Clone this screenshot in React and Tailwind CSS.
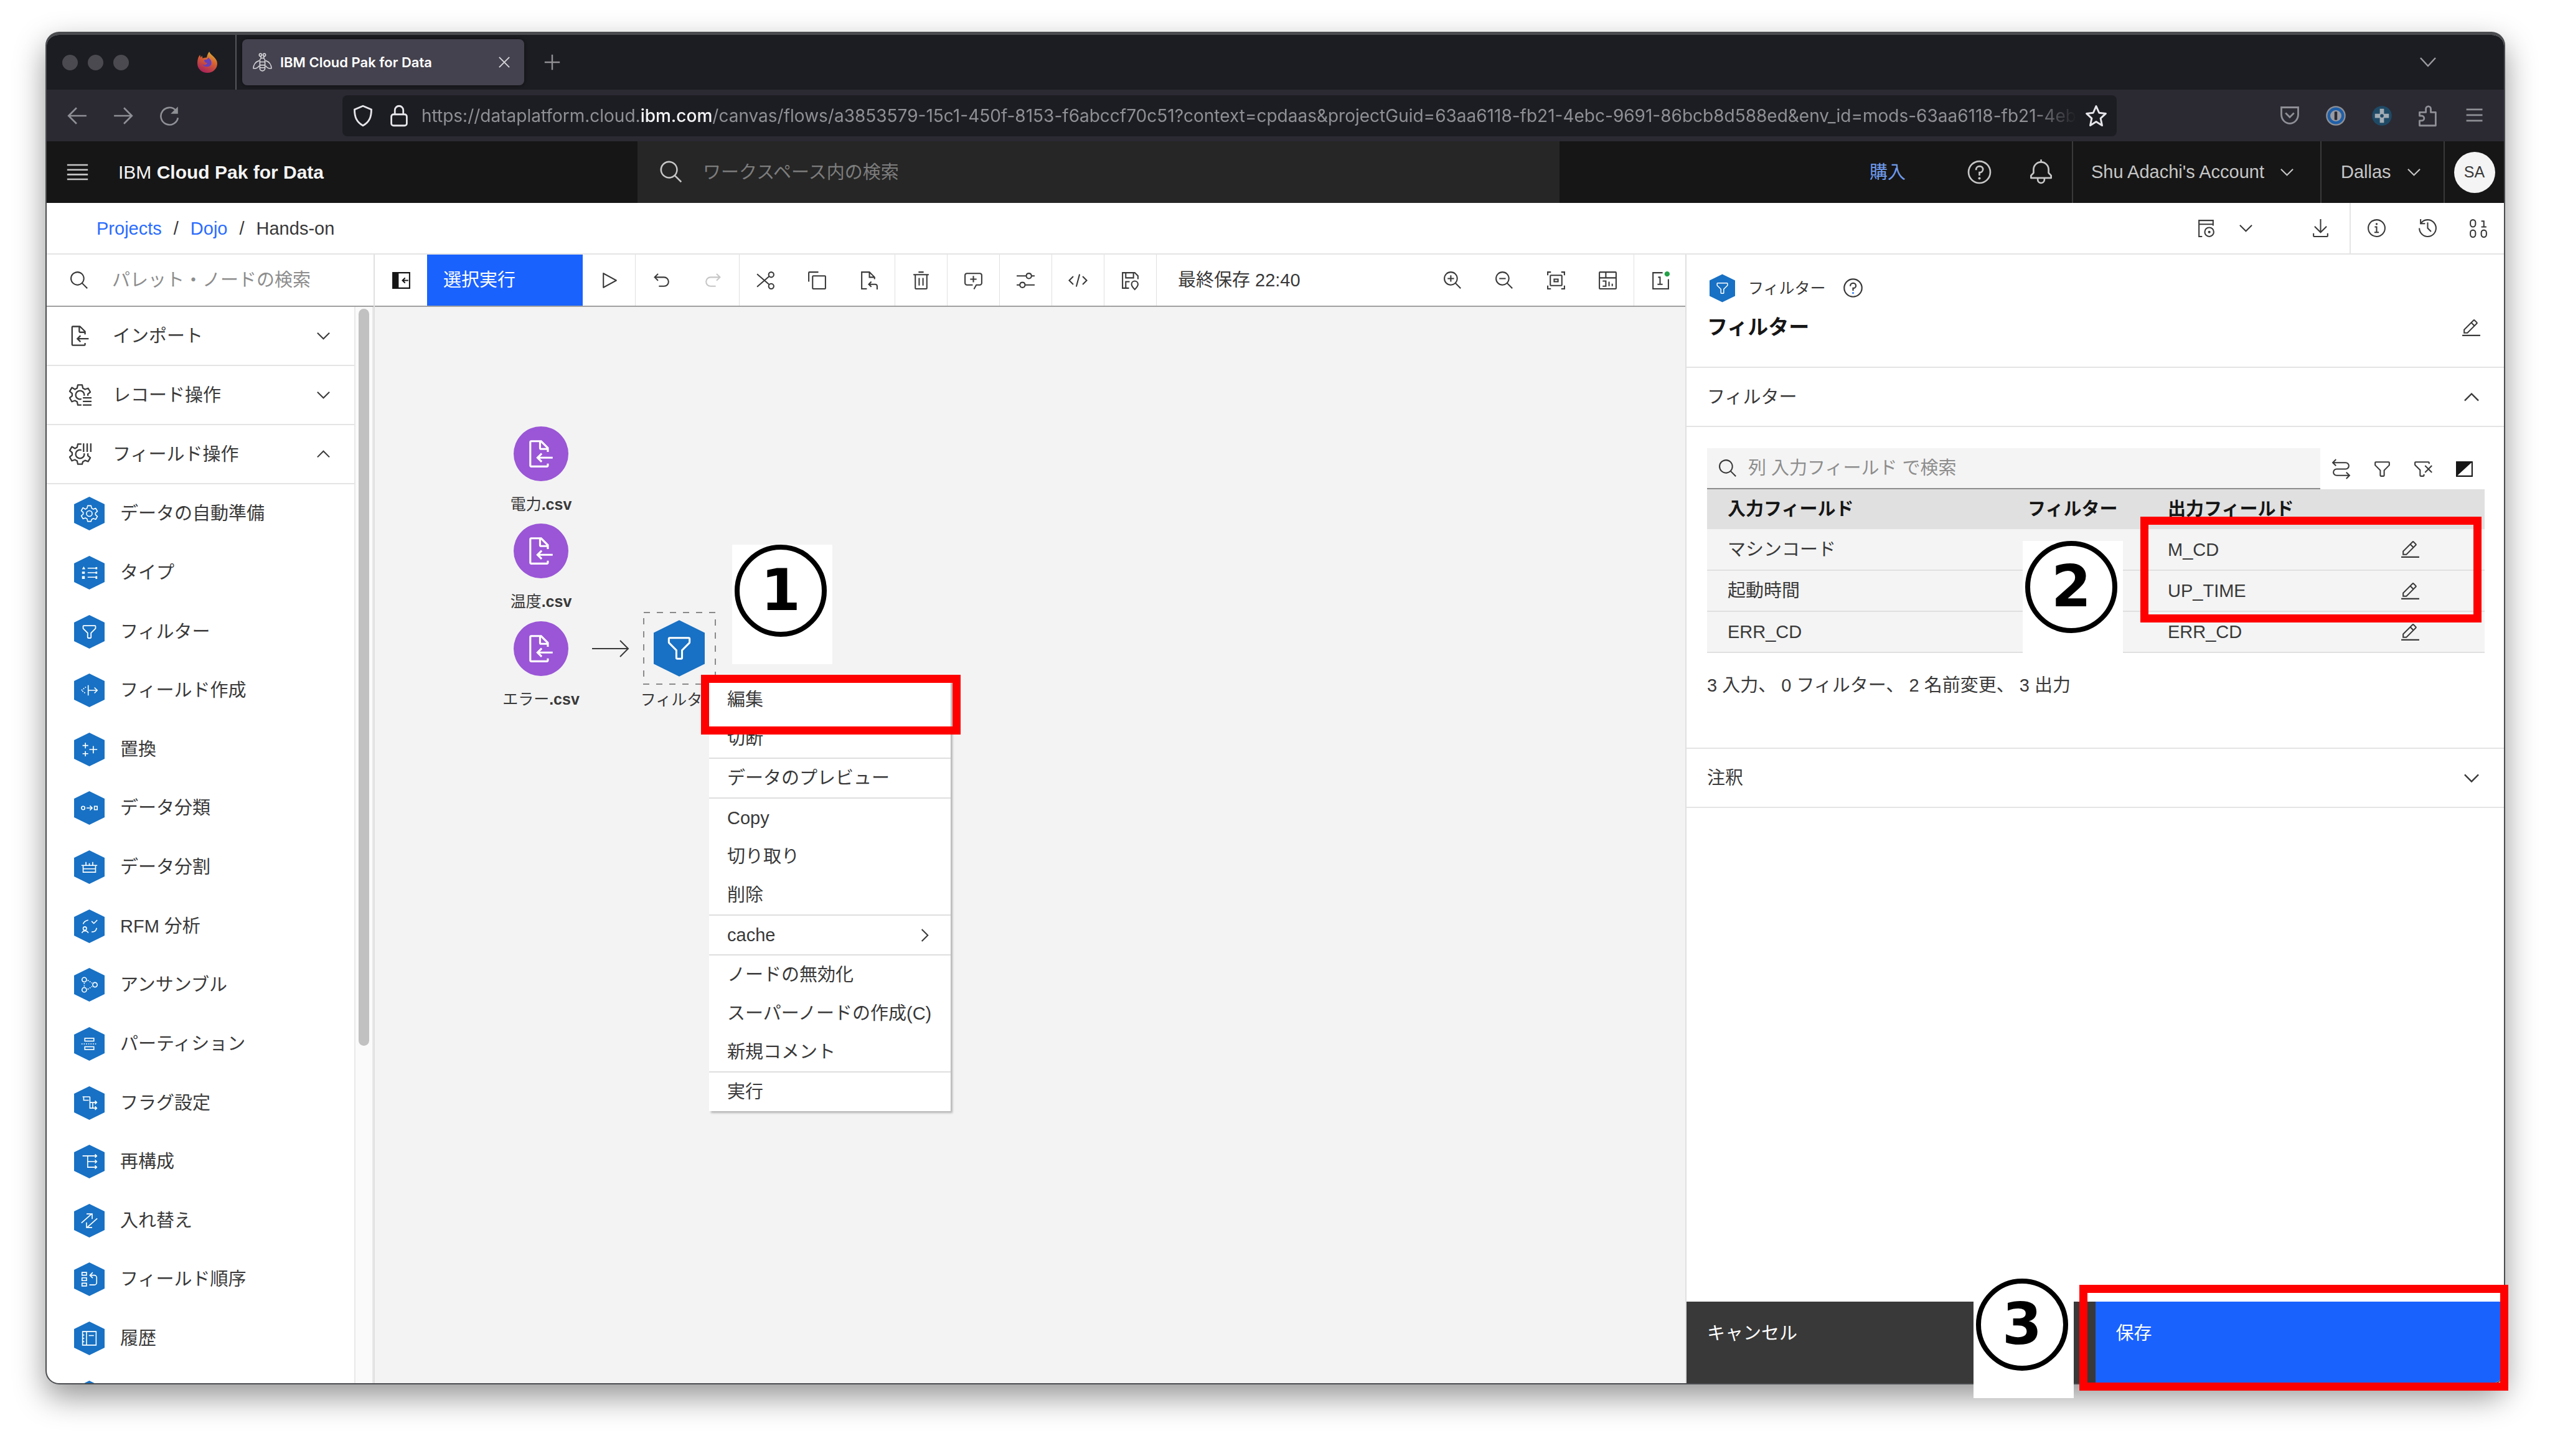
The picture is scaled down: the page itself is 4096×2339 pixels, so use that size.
import React from "react";

const FONT = "font-['Liberation_Sans','Noto_Sans_CJK_JP',sans-serif]";
const UI_FONT = "font-['Inter','Noto_Sans_CJK_JP',sans-serif]";

function Svg({ className = "size-[33px]", children, ...rest }) {
  return (
    <svg viewBox="0 0 32 32" className={"shrink-0 " + className} fill="currentColor" aria-hidden="true" {...rest}>
      {children}
    </svg>
  );
}

const line = { fill: "none", stroke: "currentColor", strokeWidth: 2 };

const GEAR =
  "M13 2h6l1 4.500 3 1.700 4.300-1.500 3 5.200-3.400 3v3.200l3.400 3-3 5.200-4.300-1.500-3 1.700L19 30h-6l-1-4.500-3-1.700-4.300 1.500-3-5.200 3.400-3v-3.200l-3.400-3 3-5.200L9 8.200l3-1.700Z";

function GearPath({ clip, id }) {
  return (
    <>
      <clipPath id={"gear-" + id}>
        <path d={clip} />
      </clipPath>
      <g clipPath={"url(#gear-" + id + ")"} {...line}>
        <path d={GEAR} strokeLinejoin="round" />
        <circle cx="16" cy="16" r="6" />
      </g>
    </>
  );
}

const ICONS = {
  menu: <path {...line} d="M3 7h26M3 13h26M3 19h26M3 25h26" />,
  search: <path d="M29 27.6 21.4 20A11 11 0 1 0 20 21.4L27.6 29ZM4 13a9 9 0 1 1 9 9 9 9 0 0 1-9-9Z" />,
  help: (
    <>
      <circle {...line} cx="16" cy="16" r="13" />
      <path {...line} d="M12 13.5V13a4 4 0 0 1 4-4h.5a3.7 3.7 0 0 1 0 7.4H16V20" />
      <circle cx="16" cy="23.5" r="1.5" />
    </>
  ),
  helpBlue: (
    <>
      <circle {...line} cx="16" cy="16" r="13" />
      <path {...line} d="M12 13.5V13a4 4 0 0 1 4-4h.5a3.7 3.7 0 0 1 0 7.4H16V20" />
      <circle cx="16" cy="23.5" r="1.5" fill="#4589ff" />
    </>
  ),
  bell: (
    <path d="M28.7 19.3 26 16.6V13a10 10 0 0 0-9-9.95V1h-2v2.05A10 10 0 0 0 6 13v3.6l-2.7 2.7a1 1 0 0 0-.3.7v3a1 1 0 0 0 1 1h7v.8a5.2 5.2 0 0 0 4.5 5.2A5 5 0 0 0 21 25v-1h7a1 1 0 0 0 1-1v-3a1 1 0 0 0-.3-.7ZM19 25a3 3 0 0 1-6 0v-1h6Zm8-3H5v-1.6l2.7-2.7a1 1 0 0 0 .3-.7v-4a8 8 0 0 1 16 0v4a1 1 0 0 0 .3.7l2.7 2.7Z" />
  ),
  chevronDown: <path d="M16 22 6 12l1.4-1.4 8.6 8.6 8.6-8.6L26 12z" />,
  chevronUp: <path d="m16 10 10 10-1.4 1.4-8.6-8.6-8.6 8.6L6 20z" />,
  chevronRight: <path d="M22 16 12 26l-1.4-1.4 8.6-8.6-8.6-8.6L12 6z" />,
  schedule: (
    <>
      <path {...line} d="M10 29H5V4h22v8M5 10h22" />
      <circle {...line} cx="21" cy="22" r="7" />
      <circle cx="21" cy="22" r="2" />
    </>
  ),
  download: (
    <path d="M26 24v4H6v-4H4v4a2 2 0 0 0 2 2h20a2 2 0 0 0 2-2v-4ZM26 14l-1.41-1.41L17 20.17V2h-2v18.17l-7.59-7.58L6 14l10 10Z" />
  ),
  info: (
    <>
      <circle {...line} cx="16" cy="16" r="13" />
      <path {...line} d="M13 14h3v8M12.5 22.5h7" />
      <circle cx="16" cy="9.5" r="1.6" />
    </>
  ),
  history: (
    <>
      <path d="M20.59 22 15 16.41V7h2v8.58l5 5.01Z" />
      <path d="M16 2A13.94 13.94 0 0 0 6 6.23V2H4v8h8V8H7.08A12 12 0 1 1 4 16H2A14 14 0 1 0 16 2Z" />
    </>
  ),
  binary: (
    <g {...line}>
      <rect x="3" y="3" width="8" height="11" rx="4" />
      <path d="M20 5h4v9M20 14h8" />
      <rect x="3" y="19" width="8" height="11" rx="4" />
      <rect x="20" y="19" width="8" height="11" rx="4" />
    </g>
  ),
  panelToggle: (
    <>
      <path {...line} d="M3 4h26v24H3z" />
      <path d="M3 4h9v24H3z" />
      <path {...line} d="M27 16h-9M22 12l-4 4 4 4" />
    </>
  ),
  play: (
    <path d="M7 28a1 1 0 0 1-1-1V5a1 1 0 0 1 1.48-.88l20 11a1 1 0 0 1 0 1.76l-20 11A1 1 0 0 1 7 28ZM8 6.69v18.62L24.93 16Z" />
  ),
  undo: (
    <path d="M20 10H7.8l3.6-3.6L10 5l-6 6 6 6 1.4-1.4L7.8 12H20a6 6 0 0 1 0 12h-8v2h8a8 8 0 0 0 0-16Z" />
  ),
  redo: (
    <path d="M12 10h12.2l-3.6-3.6L22 5l6 6-6 6-1.4-1.4 3.6-3.6H12a6 6 0 0 0 0 12h8v2h-8a8 8 0 0 1 0-16Z" />
  ),
  cut: (
    <g {...line}>
      <circle cx="25" cy="7" r="4" />
      <circle cx="25" cy="25" r="4" />
      <path d="M3 6l19 16.5M3 26 22 9.5" />
    </g>
  ),
  copy: (
    <path d="M28 10v18H10V10h18m0-2H10a2 2 0 0 0-2 2v18a2 2 0 0 0 2 2h18a2 2 0 0 0 2-2V10a2 2 0 0 0-2-2ZM4 18H2V4a2 2 0 0 1 2-2h14v2H4Z" />
  ),
  paste: (
    <g {...line}>
      <path d="M13 29H5V3h12l8 8v3M17 3v8h8" />
      <path d="M29 30v-5a3 3 0 0 0-3-3H16M20 18l-4 4 4 4" />
    </g>
  ),
  trash: (
    <path d="M12 12h2v12h-2zM18 12h2v12h-2zM4 6v2h2v20a2 2 0 0 0 2 2h16a2 2 0 0 0 2-2V8h2V6Zm4 22V8h16v20ZM12 2h8v2h-8z" />
  ),
  comment: (
    <>
      <path d="M17.74 30 16 29l4-7h6a2 2 0 0 0 2-2V8a2 2 0 0 0-2-2H6a2 2 0 0 0-2 2v12a2 2 0 0 0 2 2h9v2H6a4 4 0 0 1-4-4V8a4 4 0 0 1 4-4h20a4 4 0 0 1 4 4v12a4 4 0 0 1-4 4h-4.84Z" />
      <path d="M17 9h-2v4h-4v2h4v4h2v-4h4v-2h-4z" />
    </>
  ),
  sliders: (
    <path d="M30 8h-4.1a5 5 0 0 0-9.8 0H2v2h14.1a5 5 0 0 0 9.8 0H30Zm-9 4a3 3 0 1 1 3-3 3 3 0 0 1-3 3ZM2 24h4.1a5 5 0 0 0 9.8 0H30v-2H15.9a5 5 0 0 0-9.8 0H2Zm9-4a3 3 0 1 1-3 3 3 3 0 0 1 3-3Z" />
  ),
  code: (
    <path d="m31 16-7 7-1.41-1.41L28.17 16l-5.58-5.59L24 9ZM1 16l7-7 1.41 1.41L3.83 16l5.58 5.59L8 23ZM12.42 25.484l5.176-19.316 1.932.518-5.176 19.316z" />
  ),
  saveModel: (
    <g {...line}>
      <path d="M14 28H4V4h19l5 5v5M9 4v8h12V4M9 28V18h6" />
      <path d="M23 30c-3-3-5-5-5-8a5 5 0 0 1 10 0c0 3-2 5-5 8Z" />
    </g>
  ),
  zoomIn: (
    <path d="M18 12h-4V8h-2v4H8v2h4v4h2v-4h4zM21.45 20A10.86 10.86 0 0 0 24 13a11 11 0 1 0-11 11 10.86 10.86 0 0 0 7-2.55L27.59 29 29 27.59ZM13 22a9 9 0 1 1 9-9 9 9 0 0 1-9 9Z" />
  ),
  zoomOut: (
    <path d="M18 12H8v2h10zM21.45 20A10.86 10.86 0 0 0 24 13a11 11 0 1 0-11 11 10.86 10.86 0 0 0 7-2.55L27.59 29 29 27.59ZM13 22a9 9 0 1 1 9-9 9 9 0 0 1-9 9Z" />
  ),
  fit: (
    <g {...line}>
      <path d="M3 8V3h5M24 3h5v5M29 24v5h-5M8 29H3v-5" />
      <rect x="7" y="8" width="18" height="16" rx="1" />
      <path d="M13 14h6v4h-6z" />
    </g>
  ),
  minimap: (
    <g {...line}>
      <rect x="3" y="3" width="26" height="26" rx="1" />
      <path d="M3 12h26M13 3v9M8 17h5v8H8M18 25v-7M23 25v-4" />
    </g>
  ),
  messages: (
    <>
      <path {...line} d="M20 4H5v25h24V14M13 11h3v11M12 22h8" />
      <circle cx="27" cy="6" r="4" fill="#24a148" />
    </>
  ),
  importDoc: (
    <path d="M28 19H14.83l2.58-2.59L16 15l-5 5 5 5 1.41-1.41L14.83 21H28ZM24 14v-4a1 1 0 0 0-.29-.71l-7-7A1 1 0 0 0 16 2H6a2 2 0 0 0-2 2v24a2 2 0 0 0 2 2h16a2 2 0 0 0 2-2v-2h-2v2H6V4h8v6a2 2 0 0 0 2 2h6v2Zm-8-4V4.41L21.59 10Z" />
  ),
  edit: (
    <path d="M2 27h28v2H2zM25.4 10c.8-.8.8-2 0-2.8l-3.6-3.6c-.8-.8-2-.8-2.8 0l-15 15V25h6.4l15-15zM20.4 5 24 8.600l-3 3L17.400 8zM6 23v-3.600l10-10 3.600 3.600-10 10z" />
  ),
  filter: (
    <path d="M18 28h-4a2 2 0 0 1-2-2v-7.590L4.590 11A2 2 0 0 1 4 9.590V6a2 2 0 0 1 2-2h20a2 2 0 0 1 2 2v3.590a2 2 0 0 1-.590 1.410L20 18.410V26a2 2 0 0 1-2 2ZM6 6v3.590l8 8V26h4v-8.410l8-8V6Z" />
  ),
  filterRemove: (
    <path d="M30 11.414 28.586 10 24 14.586 19.414 10 18 11.414 22.586 16 18 20.585 19.415 22 24 17.414 28.587 22 30 20.587 25.414 16ZM4 4a2 2 0 0 0-2 2v3.170a2 2 0 0 0 .586 1.415L10 18v8a2 2 0 0 0 2 2h4a2 2 0 0 0 2-2v-2h-2v2h-4v-8.830l-.586-.585L4 9.171V6h20v2h2V6a2 2 0 0 0-2-2Z" />
  ),
  swap: (
    <path {...line} d="M8 1 3 6l5 5M3 6h20a5 5 0 0 1 0 10H9a5 5 0 0 0 0 10h20M24 21l5 5-5 5" />
  ),
  invert: (
    <>
      <path {...line} d="M4 5h24v22H4z" />
      <path d="M3 4h26L3 28z" />
    </>
  ),
  gearRows: (
    <>
      <GearPath clip="M0 0H32V17H18V32H0Z" id="rows" />
      <path {...line} d="M20 20h12M20 25h12M20 30h12" />
    </>
  ),
  gearCols: (
    <>
      <GearPath clip="M0 0H18V15H32V32H0Z" id="cols" />
      <path {...line} d="M21 1v12M26 1v12M31 1v12" />
    </>
  ),
};

const Icon = ({ name, className }) => <Svg className={className}>{ICONS[name]}</Svg>;

const glyphLine = { fill: "none", stroke: "#fff", strokeWidth: 1.8 };
const GLYPHS = {
  gear: (
    <g {...glyphLine}>
      <path d={GEAR} strokeLinejoin="round" />
      <circle cx="16" cy="16" r="5" />
    </g>
  ),
  type: (
    <g>
      <path {...glyphLine} d="M13 8h16M13 16h16M13 24h16" />
      <path fill="#fff" d="M6 5l3 5H3zM3 14h5v4H3zM3 22h5v5H3zM27 6h3v4h-3zM27 14h3v4h-3zM27 22h3v5h-3z" />
    </g>
  ),
  filter: <g fill="#fff">{ICONS.filter}</g>,
  derive: (
    <g {...glyphLine}>
      <path d="M14 7v18M14 16h16M25 11l5 5-5 5" />
      <path d="M10 10 2 16l8 6" strokeDasharray="2 2" />
    </g>
  ),
  replace: <path {...glyphLine} d="M9 4v10M4 9h10M9 19v9M4 23.500h10M23 10v13M16 16h14" />,
  classify: (
    <g {...glyphLine}>
      <circle cx="5" cy="16" r="3" />
      <path d="M11 16h9M17 12l4 4-4 4M25 13h5v6h-5z" />
    </g>
  ),
  binning: <path {...glyphLine} d="M2 13h28M5 13v12h22V13M10 7v6M16 9v4M22 7v6M5 19h22" />,
  rfm: (
    <g {...glyphLine}>
      <path d="M5 12c2-6 6-6 9-7M20 7l4 4 6-6M20 26c6 0 8-2 9-7M3 28c1-5 10-5 11 0" />
      <circle cx="8" cy="20" r="3" />
    </g>
  ),
  ensemble: (
    <g {...glyphLine}>
      <circle cx="7" cy="7" r="4" />
      <circle cx="7" cy="25" r="4" />
      <circle cx="26" cy="16" r="4" />
      <path d="M13 8l8 5M13 24l8-5M7 13v6" strokeDasharray="2 2" />
    </g>
  ),
  partition: (
    <g {...glyphLine}>
      <rect x="8" y="6" width="16" height="5" />
      <rect x="8" y="21" width="16" height="5" />
      <path d="M2 16h28" strokeDasharray="2 2" />
    </g>
  ),
  flag: <path {...glyphLine} d="M4 5h13M6 5v6h9M17 5v20h12M17 15h12M26 12l3 3-3 3M26 22l3 3-3 3M22 15v10" />,
  restructure: <path {...glyphLine} d="M4 6h25M13 6v20h16M13 16h16M26 3l3 3-3 3M26 13l3 3-3 3M26 23l3 3-3 3" />,
  transpose: <path {...glyphLine} d="M2 20 20 4M11 4h10v9M30 12 12 28M21 28H11v-9" />,
  reorder: <path {...glyphLine} d="M3 4h8v5H3zM3 13.500h8v5H3zM3 23h8v5H3zM17 9h8a4 4 0 0 1 4 4v9a4 4 0 0 1-4 4h-9M22 4l-5 5 5 5" />,
  historyBook: <path {...glyphLine} d="M4 4h24v24H4zM11 4v24M15 11h9M4 10h3M4 16h3M4 22h3" />,
};

function Hex({ glyph, className = "h-[54px] w-[49px]" }) {
  return (
    <svg viewBox="0 0 49 54" className={"shrink-0 " + className} aria-hidden="true">
      <path fill="#1871c4" d="M24.500 0 49 12v30L24.500 54 0 42V12Z" />
      <svg x="10" y="12.500" width="29" height="29" viewBox="0 0 32 32">
        {GLYPHS[glyph]}
      </svg>
    </svg>
  );
}

function IconButton({ name, label, className = "", width = "w-[83px]", size }) {
  return (
    <button type="button" aria-label={label} className={"flex h-full shrink-0 items-center justify-center " + width + " " + className}>
      <Icon name={name} className={size} />
    </button>
  );
}

function TitleBar() {
  return (
    <div className={"flex h-[88px] shrink-0 items-center bg-[#1c1d22] text-[#d6d6da] " + UI_FONT}>
      <div className="flex w-[132px] gap-4 pl-[25px]">
        <span className="size-[25px] rounded-full bg-[#4b4a50]" />
        <span className="size-[25px] rounded-full bg-[#4b4a50]" />
        <span className="size-[25px] rounded-full bg-[#4b4a50]" />
      </div>
      <div className="flex h-full w-[173px] items-center justify-end border-r-2 border-[#55565b] pr-[28px]">
        <svg viewBox="0 0 32 32" className="size-[34px]" aria-hidden="true">
          <defs>
            <linearGradient id="fox" x1="0.800" y1="0" x2="0.300" y2="1">
              <stop offset="0" stopColor="#d8b83c" />
              <stop offset="0.400" stopColor="#d9652f" />
              <stop offset="1" stopColor="#a81f5c" />
            </linearGradient>
          </defs>
          <path fill="url(#fox)" d="M19 0c1 3 4 5 7 8 3 3 5 6 5 10a15 14 0 0 1-30 0c0-5 1-10 4-13l1 4 2-3 1 4c2-1 4-1 6-1 1-4 2-7 4-9Z" />
          <path fill="#6540b8" d="M11 13c3-2 5 1 6-4 4 2 6 6 5 10a7 6 0 0 1-13 0c3 2 6 1 7-2-3 0-4-1-5-4Z" />
        </svg>
      </div>
      <div className="ml-[9px] flex h-[74px] w-[453px] items-center rounded-lg bg-[#44424e] pr-[22px] pl-4 shadow-[0_0_8px_rgba(0,0,0,0.5)]">
        <Svg className="size-[33px]">
          <g fill="none" stroke="currentColor" strokeWidth="1.600">
            <circle cx="13" cy="4" r="2" />
            <circle cx="19" cy="4" r="2" />
            <rect x="12" y="9" width="8" height="20" rx="4" />
            <path d="M12 15h8M12 20h8M12 24h8M11 13c-6 2-9 7-9 12 5 1 7-1 9-4M21 13c6 2 9 7 9 12-5 1-7-1-9-4M13 6l1 3M19 6l-1 3" />
          </g>
        </Svg>
        <span className="ml-3 flex-1 text-[22px] leading-8 font-semibold whitespace-nowrap text-white">IBM Cloud Pak for Data</span>
        <button type="button" aria-label="Close tab">
          <Svg className="size-[20px]">
            <path {...line} strokeWidth="3" d="M3 3l26 26M29 3 3 29" />
          </Svg>
        </button>
      </div>
      <button type="button" aria-label="New tab" className="ml-8 text-[#8f8f94]">
        <Svg className="size-[26px]">
          <path {...line} strokeWidth="3" d="M16 1v30M1 16h30" />
        </Svg>
      </button>
      <button type="button" aria-label="List all tabs" className="mr-[106px] ml-auto text-[#9a9a9f]">
        <Svg className="size-[32px]">
          <path {...line} strokeWidth="2.500" d="M4 9l12 13L28 9" />
        </Svg>
      </button>
    </div>
  );
}

function NavBar() {
  return (
    <div className={"flex h-[83px] shrink-0 items-center bg-[#2b2a33] text-[#8f8f96] " + UI_FONT}>
      <div className="flex w-[475px] items-center gap-10 pl-8">
        <button type="button" aria-label="Back">
          <Svg className="size-[34px]">
            <path {...line} strokeWidth="2.500" d="M30 16H3M15 4 3 16l12 12" />
          </Svg>
        </button>
        <button type="button" aria-label="Forward">
          <Svg className="size-[34px]">
            <path {...line} strokeWidth="2.500" d="M2 16h27M17 4l12 12-12 12" />
          </Svg>
        </button>
        <button type="button" aria-label="Reload">
          <Svg className="size-[34px]">
            <path {...line} strokeWidth="2.500" d="M29 19a13 13 0 1 1-3-11" />
            <path d="M29 2v11H18z" />
          </Svg>
        </button>
      </div>
      <div className="flex h-[66px] min-w-0 flex-1 items-center rounded-lg bg-[#1c1d22] pr-[14px] pl-[15px] text-[#e6e6ea]">
        <Svg className="size-[36px]">
          <path {...line} strokeWidth="2.500" d="M16 2l12 5c0 11-3 18-12 23C7 25 4 18 4 7Z" />
        </Svg>
        <Svg className="ml-[22px] size-[36px]">
          <rect {...line} strokeWidth="2.500" x="5" y="14" width="22" height="16" rx="3" />
          <path {...line} strokeWidth="2.500" d="M10 14V8a6 6 0 0 1 12 0v6" />
        </Svg>
        <div className="ml-[18px] min-w-0 flex-1 overflow-hidden text-[28px] leading-10 whitespace-nowrap text-[#8f8f96] [mask-image:linear-gradient(to_right,black_calc(100%-70px),transparent)]">
          https://dataplatform.cloud.<span className="font-medium text-[#f4f4f6]">ibm.com</span>
          /canvas/flows/a3853579-15c1-450f-8153-f6abccf70c51?context=cpdaas&amp;projectGuid=63aa6118-fb21-4ebc-9691-86bcb8d588ed&amp;env_id=mods-63aa6118-fb21-4eb
        </div>
        <button type="button" aria-label="Bookmark" className="ml-3">
          <Svg className="size-[38px]">
            <path {...line} strokeWidth="2.500" strokeLinejoin="round" d="m16 3 4 9 9 1-7 6.500 2 9.500-8-5-8 5 2-9.500L3 13l9-1Z" />
          </Svg>
        </button>
      </div>
      <div className="flex w-[622px] items-center justify-end gap-[38px] pr-[30px]">
        <button type="button" aria-label="Pocket">
          <Svg className="size-[36px]">
            <path {...line} strokeWidth="2.500" d="M4 4h24v10a12 13 0 0 1-24 0ZM10 12l6 6 6-6" />
          </Svg>
        </button>
        <button type="button" aria-label="Password manager">
          <Svg className="size-[36px]">
            <circle cx="16" cy="16" r="14" fill="#8f9096" />
            <circle cx="16" cy="16" r="12" fill="#1f5fa8" />
            <circle cx="16" cy="16" r="8" fill="#9a9ba2" />
            <rect x="14" y="10" width="4" height="12" rx="1" fill="#2b2a33" />
          </Svg>
        </button>
        <button type="button" aria-label="Extension">
          <Svg className="size-[36px]">
            <circle cx="16" cy="16" r="14" fill="#1f4a66" />
            <path fill="#a3acb4" d="M13 6h6v7h7v6h-7v7h-6v-7H6v-6h7z" />
            <circle cx="16" cy="16" r="2.500" fill="#1f4a66" />
          </Svg>
        </button>
        <button type="button" aria-label="Extensions">
          <Svg className="size-[36px]">
            <path {...line} strokeWidth="2.500" strokeLinejoin="round" d="M4 11h9V6a3.500 3.500 0 0 1 7 0v5h7v19H4v-7h3a3.500 3.500 0 0 0 0-7H4Z" />
          </Svg>
        </button>
        <button type="button" aria-label="Application menu">
          <Svg className="size-[36px]">
            <path {...line} strokeWidth="2.500" d="M5 7h23M5 15h23M5 23h23" />
          </Svg>
        </button>
      </div>
    </div>
  );
}

function AppHeader() {
  return (
    <header className="flex h-[99px] shrink-0 items-stretch bg-[#161616] text-[29px] text-[#c6c6c6]">
      <div className="flex w-[949px] shrink-0 items-center">
        <IconButton name="menu" label="Menu" size="size-[41px]" width="w-[98px]" />
        <h1 className="ml-[17px] text-[30px] leading-10 text-[#f4f4f4]">
          IBM <span className="font-bold">Cloud Pak for Data</span>
        </h1>
      </div>
      <label className="flex min-w-0 flex-1 items-center bg-[#262626] pl-[34px]">
        <Icon name="search" className="size-[41px]" />
        <input
          type="search"
          aria-label="ワークスペース内の検索"
          placeholder="ワークスペース内の検索"
          className="ml-[30px] min-w-0 flex-1 bg-transparent leading-10 outline-none placeholder:text-[#7d7d7d] placeholder:opacity-100"
        />
      </label>
      <div className="flex w-[1517px] shrink-0 items-stretch justify-end">
        <a href="#buy" className="mr-[69px] self-center leading-10 text-[#6f9bee]">
          購入
        </a>
        <IconButton name="help" label="Help" size="size-[43px]" width="w-[99px]" />
        <IconButton name="bell" label="Notifications" size="size-[43px]" width="w-[99px]" />
        <button type="button" className="flex w-[399px] items-center border-l-2 border-[#393939] pl-[29px]">
          Shu Adachi's Account
          <Icon name="chevronDown" className="ml-[20px] size-[33px]" />
        </button>
        <button type="button" className="flex w-[198px] items-center border-l-2 border-[#393939] pl-[31px]">
          Dallas
          <Icon name="chevronDown" className="ml-[20px] size-[33px]" />
        </button>
        <div className="flex w-[97px] items-center justify-center border-l-2 border-[#393939]">
          <button type="button" className="flex size-[66px] items-center justify-center rounded-full bg-[#f4f4f4] text-[25px] text-[#393939]">
            SA
          </button>
        </div>
      </div>
    </header>
  );
}

function Breadcrumbs() {
  return (
    <div className="flex h-[83px] shrink-0 items-stretch border-b-2 border-[#e4e4e4] bg-white text-[29px] text-[#393939]">
      <nav className="flex flex-1 items-center gap-[19px] pl-[80px] leading-10">
        <a href="#projects" className="text-[#2a6cff]">
          Projects
        </a>
        <span>/</span>
        <a href="#dojo" className="text-[#2a6cff]">
          Dojo
        </a>
        <span>/</span>
        <span>Hands-on</span>
      </nav>
      <IconButton name="schedule" label="Jobs" width="w-[64px]" />
      <IconButton name="chevronDown" label="Job options" width="w-[64px]" />
      <IconButton name="download" label="Download" className="mr-[6px] ml-[47px]" width="w-[82px]" />
      <div className="flex border-l-2 border-[#e4e4e4]">
        <IconButton name="info" label="Information" width="w-[82px]" />
        <IconButton name="history" label="History" width="w-[82px]" />
        <IconButton name="binary" label="Data" width="w-[82px]" />
      </div>
    </div>
  );
}

const FIELD_OPS = [
  ["データの自動準備", "gear"],
  ["タイプ", "type"],
  ["フィルター", "filter"],
  ["フィールド作成", "derive"],
  ["置換", "replace"],
  ["データ分類", "classify"],
  ["データ分割", "binning"],
  ["RFM 分析", "rfm"],
  ["アンサンブル", "ensemble"],
  ["パーティション", "partition"],
  ["フラグ設定", "flag"],
  ["再構成", "restructure"],
  ["入れ替え", "transpose"],
  ["フィールド順序", "reorder"],
  ["履歴", "historyBook"],
];

function PaletteGroup({ icon, label, open }) {
  return (
    <button type="button" aria-expanded={open} className="flex h-[95px] w-full shrink-0 items-center border-b-2 border-[#e4e4e4] pr-[33px] pl-[35px]">
      <Icon name={icon} className="size-[37px]" />
      <span className="ml-[34px] flex-1 text-left">{label}</span>
      <Icon name={open ? "chevronUp" : "chevronDown"} />
    </button>
  );
}

function Palette() {
  return (
    <aside className="flex w-[527px] shrink-0 flex-col border-r-2 border-[#e0e0e0] text-[29px] leading-10 text-[#393939]">
      <label className="flex h-[84px] shrink-0 items-center border-b-2 border-[#a0a0a0] pl-[36px]">
        <Icon name="search" />
        <input
          type="search"
          aria-label="パレット・ノードの検索"
          placeholder="パレット・ノードの検索"
          className="ml-[36px] min-w-0 flex-1 bg-transparent outline-none placeholder:text-[#8d8d8d] placeholder:opacity-100"
        />
      </label>
      <div className="flex min-h-0 flex-1">
        <div className="flex min-w-0 flex-1 flex-col overflow-hidden">
          <PaletteGroup icon="importDoc" label="インポート" open={false} />
          <PaletteGroup icon="gearRows" label="レコード操作" open={false} />
          <PaletteGroup icon="gearCols" label="フィールド操作" open />
          <ul className="grid h-[1514px] shrink-0 auto-rows-fr">
            {FIELD_OPS.map(([label, glyph]) => (
              <li key={label} className="flex items-center pl-[44px]">
                <Hex glyph={glyph} />
                <span className="ml-[25px]">{label}</span>
              </li>
            ))}
            <li className="flex items-center pl-[44px]">
              <Hex glyph="type" />
            </li>
          </ul>
        </div>
        <div className="w-[31px] shrink-0 border-x-2 border-[#e8e8e8] bg-[#fafafa] px-[5px] pt-[3px]">
          <div className="h-[1184px] w-[17px] rounded-full bg-[#c1c1c1]" />
        </div>
      </div>
    </aside>
  );
}

function Toolbar() {
  const group = "flex border-r border-[#e0e0e0]";
  return (
    <div className="flex h-[84px] shrink-0 items-stretch border-b-2 border-[#a0a0a0] bg-white text-[29px] text-[#393939]">
      <IconButton name="panelToggle" label="Toggle palette" className="text-[#161616]" width="w-[84px]" />
      <button type="button" className="w-[250px] bg-[#1a62fe] pl-[26px] text-left leading-10 text-white">
        選択実行
      </button>
      <div className={group}>
        <IconButton name="play" label="Run" width="w-[84px]" />
      </div>
      <div className={group}>
        <IconButton name="undo" label="Undo" />
        <IconButton name="redo" label="Redo" className="text-[#c6c6c6]" />
      </div>
      <div className={group}>
        <IconButton name="cut" label="Cut" />
        <IconButton name="copy" label="Copy" />
        <IconButton name="paste" label="Paste" />
      </div>
      <div className={group}>
        <IconButton name="trash" label="Delete" />
      </div>
      <div className={group}>
        <IconButton name="comment" label="Add comment" />
      </div>
      <div className={group}>
        <IconButton name="sliders" label="Settings" />
      </div>
      <div className={group}>
        <IconButton name="code" label="Code" />
      </div>
      <div className={group}>
        <IconButton name="saveModel" label="Save version" />
      </div>
      <p className="ml-[34px] flex-1 self-center leading-10 whitespace-nowrap">最終保存 22:40</p>
      <IconButton name="zoomIn" label="Zoom in" />
      <IconButton name="zoomOut" label="Zoom out" />
      <IconButton name="fit" label="Zoom to fit" />
      <IconButton name="minimap" label="Mini map" />
      <IconButton name="messages" label="Messages" className="border-l border-[#e0e0e0]" />
    </div>
  );
}

function SourceNode({ name, className }) {
  return (
    <div className={"absolute left-[167px] flex w-[200px] flex-col items-center " + className}>
      <div className="flex size-[88px] items-center justify-center rounded-full bg-[#9a56d6] text-white">
        <Icon name="importDoc" className="size-[50px]" />
      </div>
      <div className="mt-[22px] text-[25px] leading-[30px] whitespace-nowrap">
        {name}
        <span className="font-bold">.csv</span>
      </div>
    </div>
  );
}

const MENU = [
  ["編集", "切断"],
  ["データのプレビュー"],
  ["Copy", "切り取り", "削除"],
  ["cache"],
  ["ノードの無効化", "スーパーノードの作成(C)", "新規コメント"],
  ["実行"],
];

function ContextMenu() {
  return (
    <div role="menu" className="absolute top-[600px] left-[537px] w-[388px] divide-y-2 divide-[#dedede] bg-white text-[29px] shadow-[3px_3px_3px_rgba(0,0,0,0.25)]">
      {MENU.map((items) => (
        <div key={items[0]}>
          {items.map((item) => (
            <button key={item} type="button" role="menuitem" className="flex h-[62px] w-full items-center justify-between pr-[25px] pl-[29px] text-left leading-10 whitespace-nowrap">
              {item}
              {item === "cache" && <Icon name="chevronRight" className="size-[33px]" />}
            </button>
          ))}
        </div>
      ))}
    </div>
  );
}

function Canvas() {
  return (
    <div className="relative min-h-0 flex-1 overflow-hidden bg-[#f3f3f3] text-[#393939]">
      <SourceNode name="電力" className="top-[192px]" />
      <SourceNode name="温度" className="top-[348px]" />
      <SourceNode name="エラー" className="top-[505px]" />
      <svg viewBox="0 0 60 28" className="absolute top-[535px] left-[349px] h-[28px] w-[60px]" aria-hidden="true">
        <path d="M0 14h58M45 1l13 13-13 13" fill="none" stroke="#393939" strokeWidth="2" />
      </svg>
      <div className="absolute top-[490px] left-[389px] flex w-[200px] flex-col items-center">
        <div className="flex h-[117px] w-[117px] items-center justify-center">
          <svg viewBox="0 0 117 117" className="absolute size-[117px]" aria-hidden="true">
            <rect x="1" y="1" width="115" height="115" fill="none" stroke="#8a8a8a" strokeWidth="2" strokeDasharray="10 11" />
          </svg>
          <Hex glyph="filter" className="h-[93px] w-[82px]" />
        </div>
        <div className="mt-[9px] text-[25px] leading-[30px] whitespace-nowrap">フィルター</div>
      </div>
      <ContextMenu />
    </div>
  );
}

const ROWS = [
  ["マシンコード", "M_CD"],
  ["起動時間", "UP_TIME"],
  ["ERR_CD", "ERR_CD"],
];

function PropertiesPanel() {
  return (
    <section className="flex w-[1315px] shrink-0 flex-col border-l-2 border-[#e0e0e0] bg-white text-[29px] leading-10 text-[#393939]">
      <div className="h-[182px] shrink-0 border-b-2 border-[#e4e4e4] pt-[30px] pr-[36px] pl-[33px]">
        <div className="flex h-[47px] items-center pl-1 text-[25px]">
          <Hex glyph="filter" className="h-[46px] w-[41px]" />
          <span className="ml-[21px]">フィルター</span>
          <button type="button" aria-label="Help" className="ml-[26px]">
            <Icon name="helpBlue" className="size-[35px]" />
          </button>
        </div>
        <div className="mt-[15px] flex h-[50px] items-center justify-between">
          <h2 className="text-[33px] font-bold text-[#161616]">フィルター</h2>
          <button type="button" aria-label="Edit title">
            <Icon name="edit" />
          </button>
        </div>
      </div>
      <button type="button" aria-expanded="true" className="flex h-[95px] shrink-0 items-center justify-between border-b-2 border-[#e4e4e4] pr-[33px] pl-[33px]">
        フィルター
        <Icon name="chevronUp" className="size-[38px]" />
      </button>
      <div className="shrink-0 border-b-2 border-[#e4e4e4] pt-[34px] pr-[31px] pb-[78px] pl-[33px]">
        <div className="flex h-[66px]">
          <label className="flex min-w-0 flex-1 items-center border-b-2 border-[#8d8d8d] bg-[#f4f4f4] pl-[17px]">
            <Icon name="search" />
            <input
              type="search"
              aria-label="列 入力フィールド で検索"
              placeholder="列 入力フィールド で検索"
              className="ml-[16px] min-w-0 flex-1 bg-transparent outline-none placeholder:text-[#8d8d8d] placeholder:opacity-100"
            />
          </label>
          <IconButton name="swap" label="Swap" width="w-[66px]" />
          <IconButton name="filter" label="Filter" width="w-[66px]" />
          <IconButton name="filterRemove" label="Remove filters" width="w-[66px]" />
          <IconButton name="invert" label="Invert" className="text-[#161616]" width="w-[66px]" />
        </div>
        <table className="w-full table-fixed border-collapse text-left">
          <colgroup>
            <col className="w-[482px]" />
            <col className="w-[225px]" />
            <col />
            <col className="w-[152px]" />
          </colgroup>
          <thead className="bg-[#e0e0e0] text-[#161616]">
            <tr className="h-[64px]">
              <th className="py-0 pl-[33px]">入力フィールド</th>
              <th className="py-0 pl-[33px] whitespace-nowrap">フィルター</th>
              <th className="py-0 pl-[33px]" colSpan={2}>
                出力フィールド
              </th>
            </tr>
          </thead>
          <tbody className="bg-[#f4f4f4]">
            {ROWS.map(([source, target]) => (
              <tr key={source} className="h-[66px] border-b-2 border-[#e0e0e0]">
                <td className="py-0 pl-[33px]">{source}</td>
                <td className="py-0" />
                <td className="py-0 pl-[33px]">{target}</td>
                <td className="py-0 pl-[16px]">
                  <button type="button" aria-label={"Edit " + target} className="flex">
                    <Icon name="edit" />
                  </button>
                </td>
              </tr>
            ))}
          </tbody>
        </table>
        <p className="mt-[32px] mb-[2px]">3 入力、 0 フィルター、 2 名前変更、 3 出力</p>
      </div>
      <button type="button" aria-expanded="false" className="flex h-[95px] shrink-0 items-center justify-between border-b-2 border-[#e4e4e4] pr-[33px] pl-[33px]">
        注釈
        <Icon name="chevronDown" className="size-[38px]" />
      </button>
      <div className="mt-auto flex h-[131px] shrink-0 items-stretch text-white">
        <button type="button" className="flex flex-1 items-start bg-[#393939] pt-[31px] pl-[33px]">
          キャンセル
        </button>
        <button type="button" className="flex flex-1 items-start bg-[#1a62fe] pt-[31px] pl-[33px]">
          保存
        </button>
      </div>
    </section>
  );
}

function StepBadge({ n, className }) {
  return (
    <div className={"absolute h-[192px] w-[161px] bg-white pl-[4px] " + className}>
      <div className="flex size-[148px] items-center justify-center rounded-full border-8 border-black font-['DejaVu_Sans',sans-serif] text-[92px] leading-none font-bold text-black">
        {n}
      </div>
    </div>
  );
}

function Highlight({ className }) {
  return <div className={"pointer-events-none absolute border-[13px] border-[#ff0000] " + className} />;
}

export default function App() {
  return (
    <div className={"relative h-screen w-full overflow-hidden bg-white pt-[51px] pr-[72px] pb-[115px] pl-[73px] " + FONT}>
      <main className="flex h-full flex-col overflow-hidden rounded-[22px] border-2 border-t-[5px] border-[#4a4c4f] bg-white shadow-[0_20px_50px_rgba(0,0,0,0.42)]">
        <TitleBar />
        <NavBar />
        <AppHeader />
        <Breadcrumbs />
        <div className="flex min-h-0 flex-1 items-stretch">
          <Palette />
          <section className="flex min-w-0 flex-1 flex-col">
            <Toolbar />
            <Canvas />
          </section>
          <PropertiesPanel />
        </div>
      </main>
      <StepBadge n={1} className="top-[875px] left-[1176px]" />
      <Highlight className="top-[1084px] left-[1126px] h-[96px] w-[417px]" />
      <StepBadge n={2} className="top-[869px] right-[686px]" />
      <Highlight className="top-[830px] right-[110px] h-[170px] w-[548px]" />
      <StepBadge n={3} className="right-[765px] bottom-[93px]" />
      <Highlight className="right-[67px] bottom-[105px] h-[170px] w-[689px]" />
    </div>
  );
}
